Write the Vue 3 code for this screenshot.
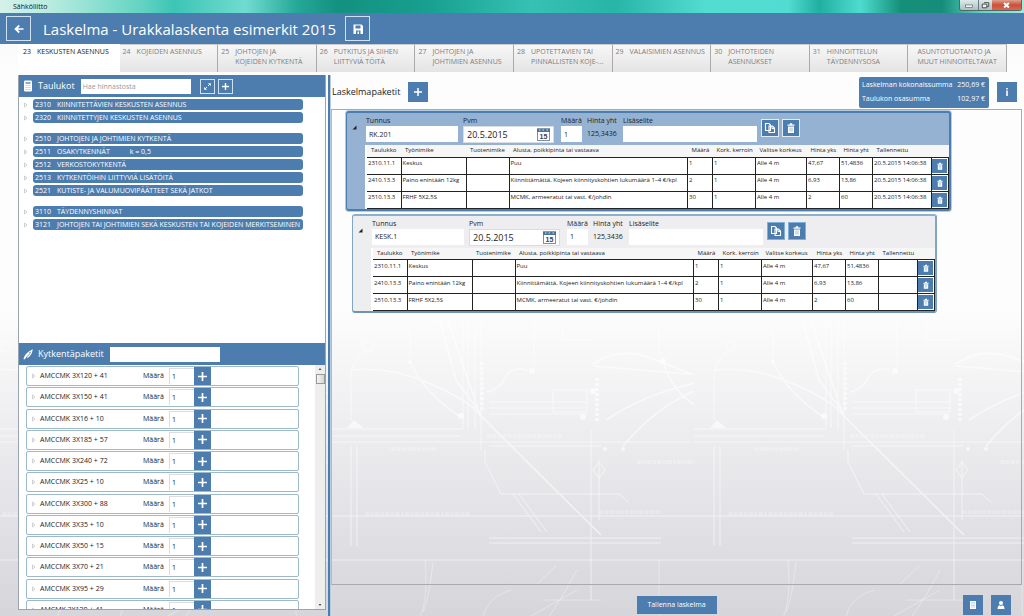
<script setup>
import { ref } from 'vue'

const tabs = [
  { no: '23', lines: ['KESKUSTEN ASENNUS'] },
  { no: '24', lines: ['KOJEIDEN ASENNUS'] },
  { no: '25', lines: ['JOHTOJEN JA', 'KOJEIDEN KYTKENTÄ'] },
  { no: '26', lines: ['PUTKITUS JA SIIHEN', 'LIITTYVIÄ TÖITÄ'] },
  { no: '27', lines: ['JOHTOJEN JA', 'JOHTIMIEN ASENNUS'] },
  { no: '28', lines: ['UPOTETTAVIEN TAI', 'PINNALLISTEN KOJE-...'] },
  { no: '29', lines: ['VALAISIMIEN ASENNUS'] },
  { no: '30', lines: ['JOHTOTEIDEN', 'ASENNUKSET'] },
  { no: '31', lines: ['HINNOITTELUN', 'TÄYDENNYSOSA'] },
  { no: '', lines: ['ASUNTOTUOTANTO JA', 'MUUT HINNOITELTAVAT'] },
]
const activeTab = ref(0)

const groups = [
  [
    { no: '2310', name: 'KIINNITETTÄVIEN KESKUSTEN ASENNUS' },
    { no: '2320', name: 'KIINNITETTYJEN KESKUSTEN ASENNUS' },
  ],
  [
    { no: '2510', name: 'JOHTOJEN JA JOHTIMIEN KYTKENTÄ' },
    { no: '2511', name: 'OSAKYTKENNÄT', factor: 'k = 0,5' },
    { no: '2512', name: 'VERKOSTOKYTKENTÄ' },
    { no: '2513', name: 'KYTKENTÖIHIN LIITTYVIÄ LISÄTÖITÄ' },
    { no: '2521', name: 'KUTISTE- JA VALUMUOVIPÄÄTTEET SEKÄ JATKOT' },
  ],
  [
    { no: '3110', name: 'TÄYDENNYSHINNAT' },
    { no: '3121', name: 'JOHTOJEN TAI JOHTIMIEN SEKÄ KESKUSTEN TAI KOJEIDEN MERKITSEMINEN' },
  ],
]

const kits = ref(
  ['AMCCMK 3X120 + 41', 'AMCCMK 3X150 + 41', 'AMCCMK 3X16 + 10', 'AMCCMK 3X185 + 57',
    'AMCCMK 3X240 + 72', 'AMCCMK 3X25 + 10', 'AMCCMK 3X300 + 88', 'AMCCMK 3X35 + 10',
    'AMCCMK 3X50 + 15', 'AMCCMK 3X70 + 21', 'AMCCMK 3X95 + 29', 'AMCMK 3X120 + 41']
    .map((name) => ({ name, qty: '1' }))
)

const columns = ['Taulukko', 'Työnimike', 'Tuotenimike', 'Alusta, poikkipinta tai vastaava', 'Määrä',
  'Kork. kerroin', 'Valitse korkeus', 'Hinta yks', 'Hinta yht', 'Tallennettu', '']

const makeRows = (saved) => [
  ['2310.11.1', 'Keskus', '', 'Puu', '1', '1', 'Alle 4 m', '47,67', '51,4836', saved],
  ['2410.13.3', 'Paino enintään 12kg', '', 'Kiinnittämättä, Kojeen kiinnityskohtien lukumäärä 1–4 €/kpl', '2', '1', 'Alle 4 m', '6,93', '13,86', saved],
  ['2510.13.3', 'FRHF 5X2,5S', '', 'MCMK, armeeratut tai vast. €/johdin', '30', '1', 'Alle 4 m', '2', '60', saved],
]
const packs = ref([
  { id: 'a', code: 'RK.201', date: '20.5.2015', qty: '1', total: '125,3436', note: '', rows: makeRows('20.5.2015 14:06:38') },
  { id: 'b', code: 'KESK.1', date: '20.5.2015', qty: '1', total: '125,3436', note: '', rows: makeRows('') },
])
const selected = ref('a')
</script>

<template>
  <div class="app">
    <svg class="schematic" aria-hidden="true">
      <defs>
        <pattern id="wires" x="331" y="0" width="363" height="616" patternUnits="userSpaceOnUse">
          <g fill="none" stroke="#fff" stroke-width="1" opacity=".55">
            <path d="M20 370 Q60 366 100 384 T148 414 L270 535 M79 362 Q95 395 130 417 M108 318 L125 380 150 414 M116 318 L148 412" stroke-width="1.6" />
            <path d="M156 392 Q168 390 174 378 T196 370 M262 364 Q290 345 325 360 T382 380 M262 366 L380 376 M380 380 Q320 390 275 420 M382 384 Q330 400 292 446 M332 362 Q346 404 382 412" stroke-width="1.6" />
            <path d="M0 429 H132 M0 442 H360 M158 402 H256 M158 408 H256 M158 414 H256 M0 436 H130 M158 446 H270 M0 516 H363 M158 538 H330 M158 543 H330 M0 560 H363" />
            <path d="M132 318 V428 M137 318 V428 M144 318 V430 M150 318 V450 M154 450 V462 L170 494 H288 L298 503 M188 494 L216 532 M182 494 L210 532 M20 446 V546 M26 446 V546 M260 430 V600 M268 460 V520" />
            <path d="M94 560 Q98 610 84 625 T0 640 M102 562 Q98 600 92 612 M246 570 Q220 620 190 650 M328 560 V614 Q340 638 390 638 M152 640 Q145 600 180 590 M212 600 H270 M200 616 L246 590 M225 566 L206 584" opacity=".6" />
            <path d="M79 318 V358 M203 318 V366 M232 318 V340 H262 M328 318 V358 M35 350 Q24 358 20 372 V420" />
            <path d="M266 378 V422 M151 362 V412" stroke-width="4" stroke-dasharray="3 2" />
            <path d="M60 449 H106 M156 436 H232 M306 462 H372 M34 514 H140 M268 512 H330" stroke-width="4" stroke-dasharray="5 1 3 1" opacity=".4" />
            <path d="M268 462 l6 8 -6 8 -6 -8z M40 342 a5 5 0 1 0 1 1 M222 390 h34 v22 h-34z" />
          </g>
          <g fill="#fff" opacity=".6">
            <circle cx="79" cy="362" r="2" /><circle cx="201" cy="371" r="3" /><circle cx="332" cy="361" r="3" />
            <circle cx="130" cy="416" r="3" /><circle cx="262" cy="391" r="3" /><path d="M16 428 l7 -8 9 8z" />
            <circle cx="292" cy="449" r="2" /><circle cx="274" cy="449" r="2" /><circle cx="252" cy="417" r="3" />
          </g>
        </pattern>
      </defs>
      <rect width="100%" height="100%" fill="url(#wires)" />
    </svg>

    <div class="titlebar">
      <span>Sähköliitto</span>
      <div class="winbtns">
        <button class="wmin" aria-label="Pienennä"><svg viewBox="0 0 20 10"><rect x="6" y="5" width="8" height="2.500" fill="#fff" stroke="#555" stroke-width=".7" /></svg></button>
        <button class="wmax" aria-label="Palauta"><svg viewBox="0 0 14 10"><path d="M5.500 2.500h5v4h-2M3.500 4h5v4h-5z" fill="#eee" stroke="#444" /></svg></button>
        <button class="wclose" aria-label="Sulje"><svg viewBox="0 0 30 10"><path d="M12.500 3l5 4.500M17.500 3l-5 4.500" stroke="#fff" stroke-width="2" /></svg></button>
      </div>
    </div>

    <header class="header">
      <button class="outline big" aria-label="Takaisin"><svg width="12" height="12" viewBox="0 0 12 12"><path d="M10.500 6H3M6.300 2.500L2.500 6l3.800 3.500" fill="none" stroke="#fff" stroke-width="1.700" /></svg></button>
      <h1>Laskelma - Urakkalaskenta esimerkit 2015</h1>
      <button class="outline big" aria-label="Tallenna"><svg width="12" height="12" viewBox="0 0 12 12"><path fill="#fff" fill-rule="evenodd" d="M1.500 1.500h8l1.500 1.500v8h-9.500zM3.500 2.500v3h5v-3zM4 7.500v3.500h1.500v-2.500h1.500v2.500h1.500v-3.500z" /></svg></button>
    </header>

    <nav class="tabs">
      <button v-for="(t, i) in tabs" :key="i" :class="{ active: i === activeTab }" @click="activeTab = i">
        <span v-if="t.no" class="no">{{ t.no }}</span>
        <span><template v-for="(l, j) in t.lines" :key="j"><br v-if="j">{{ l }}</template></span>
      </button>
    </nav>

    <main class="main">
      <aside class="side">
        <div class="bar">
          <svg width="10" height="12" viewBox="0 0 10 12"><rect x="1" y=".5" width="8" height="11" rx="1.200" fill="#fff" /><path d="M2.500 3h5" stroke="#4d7dae" stroke-width="1.300" /><path d="M2.500 5.500h5M2.500 7.500h5M2.500 9.500h5" stroke="#9dbad6" stroke-width=".8" stroke-dasharray="1.200 .7" /></svg>
          <h2><label for="find">Taulukot</label></h2>
          <input id="find" class="find" placeholder="Hae hinnastosta">
          <button class="outline small first" aria-label="Laajenna"><svg width="9" height="9" viewBox="0 0 9 9"><path d="M2 7l5-5" stroke="#fff" stroke-width="1" stroke-dasharray="2.700 1.600" /><path d="M5 1.200h2.800v2.800zM1.200 5v2.800h2.800z" fill="#fff" /></svg></button>
          <button class="outline small" aria-label="Lisää"><svg width="9" height="9" viewBox="0 0 9 9"><path d="M4.500 1v7M1 4.500h7" stroke="#fff" stroke-width="1.400" /></svg></button>
        </div>
        <div class="tree">
          <ul v-for="(g, gi) in groups" :key="gi">
            <li v-for="n in g" :key="n.no">
              <svg width="4" height="6" viewBox="0 0 4 6"><path d="M.5 1l2.500 2-2.500 2z" fill="#fff" stroke="#bbb" stroke-width=".7" /></svg>
              <button class="node"><span class="no">{{ n.no }}</span><span>{{ n.name }}</span><span v-if="n.factor" class="factor">{{ n.factor }}</span></button>
            </li>
          </ul>
        </div>
        <div class="bar">
          <svg width="10" height="11" viewBox="0 0 10 11"><path d="M1 10C1.500 7 5 3 9 1.200 8.500 4.500 6.500 7 4.200 8.500M2.500 7.800L6.500 3.800M.8 10.200l2.200-2.200" fill="none" stroke="#fff" stroke-width="1.200" /></svg>
          <h2><label for="kit">Kytkentäpaketit</label></h2>
          <input id="kit" class="find">
        </div>
        <div class="kits">
          <ul>
            <li v-for="(k, i) in kits" :key="i">
              <svg width="4" height="6" viewBox="0 0 4 6"><path d="M.5 1l2.500 2-2.500 2z" fill="#fff" stroke="#bbb" stroke-width=".7" /></svg>
              <span class="kname">{{ k.name }}</span>
              <label :for="'kq' + i">Määrä</label>
              <input :id="'kq' + i" v-model="k.qty">
              <button aria-label="Lisää"><svg width="11" height="11" viewBox="0 0 11 11"><path d="M5.500 1v9M1 5.500h9" stroke="#fff" stroke-width="1.700" /></svg></button>
            </li>
          </ul>
          <div class="scroll">
            <svg width="8" height="8" viewBox="0 0 8 8"><path d="M2.500 5L4 3l1.500 2z" fill="#555" /></svg>
            <i></i>
            <svg class="down" width="8" height="8" viewBox="0 0 8 8"><path d="M2.500 3L4 5l1.500-2z" fill="#555" /></svg>
          </div>
        </div>
      </aside>

      <div class="splitter"></div>

      <section class="work">
        <div class="workhead">
          <h2>Laskelmapaketit</h2>
          <button class="solid" aria-label="Lisää paketti"><svg width="10" height="10" viewBox="0 0 10 10"><path d="M5 1v8M1 5h8" stroke="#fff" stroke-width="1.500" /></svg></button>
          <dl class="sums">
            <dt>Laskelman kokonaissumma</dt><dd>250,69 €</dd>
            <dt>Taulukon osasumma</dt><dd>102,97 €</dd>
          </dl>
          <button class="solid info" aria-label="Tietoja"><svg width="10" height="10" viewBox="0 0 10 10"><path d="M4.200 1h1.600v1.500H4.200zM4.200 3.500h1.600V9H4.200z" fill="#fff" /></svg></button>
        </div>

        <div class="canvas">
          <article v-for="p in packs" :key="p.id" class="pack" :class="{ selected: p.id === selected }" @click="selected = p.id">
            <svg class="caret" width="5" height="5" viewBox="0 0 5 5"><path d="M4.500 .5v4h-4z" fill="#222" /></svg>
            <div class="body">
              <div class="fields">
                <div class="field code"><label :for="'c' + p.id">Tunnus</label><input :id="'c' + p.id" v-model="p.code"></div>
                <div class="field date">
                  <label :for="'d' + p.id">Pvm</label>
                  <div class="datebox">
                    <input :id="'d' + p.id" v-model="p.date">
                    <button aria-label="Valitse päivä"><svg width="13" height="13" viewBox="0 0 13 13"><rect x=".5" y="1" width="12" height="11.500" fill="#fff" stroke="#7890aa" /><path d="M0 .5h13v3.500H0z" fill="#4d7298" /><path d="M2 2h1.500M5.500 2h1.500M9.500 2H11" stroke="#dce6f0" /><text x="6.500" y="11" text-anchor="middle" class="day">15</text></svg></button>
                  </div>
                </div>
                <div class="field qty"><label :for="'q' + p.id">Määrä</label><input :id="'q' + p.id" v-model="p.qty"></div>
                <div class="field total"><span>Hinta yht</span><output>{{ p.total }}</output></div>
                <div class="field note"><label :for="'n' + p.id">Lisäselite</label><input :id="'n' + p.id" v-model="p.note"></div>
                <button class="tool" aria-label="Kopioi"><svg width="12" height="12" viewBox="0 0 12 12"><path d="M1.500 1.500h3.500l1.500 1.500v5.500h-5zM5 4h3.500l2 2v4.500H5z" fill="#4d7dae" stroke="#fff" stroke-width="1.100" /><path d="M8 4v2.500h2.500" fill="none" stroke="#fff" /></svg></button>
                <button class="tool" aria-label="Poista"><svg width="12" height="12" viewBox="0 0 12 12"><path d="M2.500 2.500h7v1.300h-7zM4.800 1.300h2.400v1.500H4.800zM3 4.500h6v6.500H3z" fill="#fff" /><path d="M4.800 5.500v4M6 5.500v4M7.200 5.500v4" stroke="#8fb0d0" stroke-width=".6" /></svg></button>
              </div>
              <table :class="{ unsaved: !p.rows[0][9] }">
                <colgroup><col v-for="n in 11" :key="n" :class="'c' + n"></colgroup>
                <thead><tr><th v-for="(c, i) in columns" :key="i">{{ c }}</th></tr></thead>
                <tbody>
                  <tr v-for="r in p.rows" :key="r[0]">
                    <td v-for="(c, i) in r" :key="i">{{ c }}</td>
                    <td class="act"><button aria-label="Poista rivi"><svg width="8" height="8" viewBox="0 0 12 12"><path d="M2 2.500h8v1.500H2zM4.500 1h3v1.500h-3zM2.700 4.800h6.600V11.500H2.700z" fill="#fff" /><path d="M5 6v4M7 6v4" stroke="#8fb0d0" stroke-width=".8" /></svg></button></td>
                  </tr>
                </tbody>
              </table>
            </div>
          </article>
        </div>

        <footer class="foot">
          <button class="save">Tallenna laskelma</button>
          <div class="right">
            <button class="solid" aria-label="Laskin"><svg width="10" height="10" viewBox="0 0 10 10"><path d="M2 1h6v8H2z" fill="#fff" /><path d="M3 2.500h4M3 4h4M3 5.500h4M3 7h4" stroke="#a9c2db" stroke-width=".6" /></svg></button>
            <button class="solid" aria-label="Käyttäjä"><svg width="10" height="10" viewBox="0 0 10 10"><circle cx="5" cy="3" r="2" fill="#fff" /><path d="M1.500 9c0-3 1.500-3.700 2.500-3.700L5 6.500l1-1.200c1 0 2.500.7 2.500 3.700z" fill="#fff" /></svg></button>
          </div>
        </footer>
      </section>
    </main>
  </div>
</template>

<style>
body { margin: 0; }
</style>

<style scoped>
* { box-sizing: border-box; }
.app {
  position: relative;
  height: 100vh;
  display: flex;
  flex-direction: column;
  overflow: hidden;
  font: 7px/10px "Open Sans", "Noto Sans", sans-serif;
  color: #222;
  background: linear-gradient(#f7f7f8 0, #fdfdfd 80px, #fdfdfd 50%, #e9e9ec 75%, #d6d5da 100%);
}
.schematic { position: absolute; inset: 0; width: 100%; height: 100%; }
.app > :not(.schematic) { position: relative; }
button { display: flex; align-items: center; justify-content: center; padding: 0; border: 0; font: inherit; color: inherit; background: none; }
input { min-width: 0; padding: 0; border: 0; font: inherit; color: inherit; background: #fff; outline: 0; }
h1, h2, ul, dl, dd { margin: 0; padding: 0; font-weight: 400; }
ul { list-style: none; }
svg { flex: none; }

.titlebar {
  display: flex;
  justify-content: space-between;
  height: 13px;
  padding: 0 2px 0 13px;
  line-height: 13px;
  color: #111;
  background: linear-gradient(90deg, #d4f1ea 0, #b9ebe0 50px, #7ddccb 11%, #62d2c2 14%, #3cc5b5 17%, #70dccf 24%, #25a898 29%, #139080 33%, #18a090 42%, #36c2b3 52%, #27b5a6 60%, #52ddd0 69%, #50dcd0 77%, #20b09f 80%, #4edccf 84%, #158f79 88%, #168d7b 92%, #62d6c7 96%, #a5e8dc 100%);
}
.winbtns { display: flex; height: 11px; border: 1px solid #566; border-top: 0; border-radius: 0 0 3px 3px; overflow: hidden; }
.winbtns svg { width: 100%; height: 10px; }
.wmin { width: 19px; background: linear-gradient(#dceae8, #a9c2c0); border-right: 1px solid #678; }
.wmax { width: 13px; background: linear-gradient(#dceae8, #a9c2c0); }
.wclose { width: 29px; background: linear-gradient(#e0a08c, #c9503a 50%, #d9694f); }

.header { display: flex; align-items: center; gap: 9px; height: 31px; padding: 0 6px; background: #4d7dae; color: #fff; }
.header h1 { margin-left: 3px; font-size: 15px; line-height: 24px; white-space: nowrap; }
.outline { border: 1px solid #cfe0ef; }
.big { width: 25px; height: 25px; }

.tabs { display: grid; grid-template-columns: minmax(0, 102fr) repeat(9, minmax(0, 99fr)); margin: 0 17px 0 18px; height: 28px; }
.tabs button {
  align-items: flex-start;
  justify-content: flex-start;
  gap: 6px;
  padding: 2px 0 0 3px;
  text-align: left;
  white-space: nowrap;
  color: #7d7d7d;
  background: linear-gradient(#f7f7f7, #e4e4e5);
  border-top: 1px solid #ccc;
  border-right: 1px solid #aaa;
}
.tabs button:last-child { padding-left: 9px; }
.tabs button.active { padding-left: 5px; color: #222; background: #fff; border-color: #fff; }

.main { flex: 1; min-height: 0; display: grid; grid-template-columns: minmax(0, 310fr) 3px minmax(0, 691fr); padding: 3px 2px 0 18px; }
.side { display: flex; flex-direction: column; min-height: 0; margin-right: 2px; margin-bottom: 6px; background: #fff; border: 1px solid #9aa4ae; border-top: 0; }
.bar { display: flex; align-items: center; height: 22px; padding-left: 4px; background: #4d7dae; color: #fff; }
.bar h2 { margin: 0 6px 0 5px; font-size: 9px; line-height: 14px; }
.find { width: 110px; height: 15px; padding-left: 2px; color: #333; }
.find::placeholder { color: #999; opacity: 1; }
.small { width: 15px; height: 15px; margin-left: 3px; }
.small.first { margin-left: 9px; }

.tree { flex: 1; min-height: 0; display: flex; flex-direction: column; gap: 10px; padding: 2px 22px 0 5px; }
.tree ul { display: grid; gap: 2px; }
.tree li { display: flex; align-items: center; gap: 5px; }
.node { flex: 1; min-width: 0; height: 11px; justify-content: flex-start; padding: 0 2px; overflow: hidden; white-space: nowrap; color: #fff; background: #4d7dae; border-radius: 3px; }
.node .no { width: 22px; flex: none; text-align: left; }
.factor { margin-left: 20px; }

.kits { flex: 1; min-height: 0; display: flex; overflow: hidden; }
.kits ul { flex: 1; height: calc(100% + 11px); display: flex; flex-direction: column; justify-content: space-between; padding: 1px 16px 0 7px; }
.kits li { display: flex; align-items: center; height: 20px; padding-left: 5px; border: 1px solid #9dbacb; border-radius: 2px; background: #fff; }
.kname { width: 103px; margin-left: 4px; white-space: nowrap; }
.kits label { width: 26px; }
.kits input { width: 25px; height: 16px; padding-left: 2px; border: 1px solid #ddd; border-width: 1px 0 0 1px; }
.kits button { width: 17px; height: 18px; background: #4d7dae; }
.scroll { width: 10px; display: flex; flex-direction: column; align-items: center; background: #eee; }
.scroll i { width: 9px; height: 10px; margin-top: 1px; border: 1px solid #999; background: linear-gradient(90deg, #f5f5f5, #d5d5d5); }
.scroll .down { margin-top: auto; }

.splitter { background: #4d7dae; border-right: 1px solid #b8cbe0; }

.work { display: flex; flex-direction: column; min-width: 0; min-height: 0; }
.workhead { display: flex; align-items: center; height: 34px; padding: 0 5px 0 1px; }
.workhead h2 { font-size: 9px; line-height: 14px; margin-right: 8px; white-space: nowrap; }
.solid { width: 20px; height: 20px; background: #4d7dae; }
.sums { display: grid; grid-template-columns: 1fr auto; align-content: space-around; width: 130px; height: 31px; margin-left: auto; padding: 2px 4px 2px 3px; border-radius: 2px; color: #fff; background: #4d7dae; line-height: 12px; white-space: nowrap; }
.sums dd { text-align: right; }
.info { margin-left: 8px; }

.canvas { flex: 1; min-height: 0; display: flex; flex-direction: column; align-items: flex-start; gap: 3px; padding: 1px 14px; border: 1px solid #aaaaae; border-left-color: #cdb0a6; }
.pack { display: flex; margin-left: 6px; padding-top: 3px; border: 2px solid; border-left-width: 1px; border-color: #8db0cf #7fa5c8 #6f93b8; border-radius: 3px; background: #eeeef0; }
.pack.selected { margin-left: 0; border-color: #4d7dae; background: #95b2d2; box-shadow: 0 0 0 1px #b4cbe0; }
.caret { margin: 9px 8px 0 5px; }
.fields { display: flex; align-items: flex-start; height: 29px; padding-left: 1px; }
.field { display: flex; flex-direction: column; }
.field label, .field span { line-height: 10px; }
.field input { height: 16px; padding-left: 3px; }
.code { width: 92px; margin-right: 5px; }
.date { width: 91px; margin-right: 7px; }
.datebox { display: flex; align-items: center; height: 17px; padding-right: 3px; border: 1px solid #d6dde4; background: #fff; }
.datebox input { flex: 1; height: 15px; font-size: 9px; background: none; }
.day { font: bold 7px "Liberation Sans", sans-serif; fill: #345; }
.qty { width: 26px; }
.qty input { width: 21px; }
.total { width: 36px; }
.total output { line-height: 16px; }
.note { width: 134px; margin-right: 4px; }
.tool { width: 18px; height: 18px; margin: 3px 3px 0 0; background: #4d7dae; border: 1px solid #7fb0dc; }
.selected .tool { border-color: #e3edf6; }

table { table-layout: fixed; width: 584px; border-collapse: collapse; border-left: 2px solid #fff; background: #fff; font-size: 6px; line-height: 9px; }
table.unsaved { width: 564px; }
th { height: 12px; padding: 0 4px; font-weight: 400; text-align: left; white-space: nowrap; background: #f6f6f7; }
td { height: 17px; padding: 0 1px 4px; white-space: nowrap; vertical-align: middle; border: 1px solid #222; }
td:first-child { border-left: 0; }
.act { padding: 0; }
.act button { width: 15px; height: 14px; background: #4d7dae; }
.c1 { width: 35px; }
.c2 { width: 65px; }
.c3 { width: 43px; }
.c5 { width: 25px; }
.c6 { width: 43px; }
.c7 { width: 51px; }
.c8 { width: 33px; }
.c9 { width: 33px; }
.c10 { width: 59px; }
.unsaved .c10 { width: 39px; }
.c11 { width: 17px; }

.foot { flex: none; display: grid; grid-template-columns: 1fr auto 1fr; align-items: center; height: 31px; padding: 8px 11px 0; }
.save { grid-column: 2; width: 80px; height: 18px; color: #fff; background: #4d7dae; }
.right { grid-column: 3; display: flex; justify-content: flex-end; gap: 8px; }
</style>
